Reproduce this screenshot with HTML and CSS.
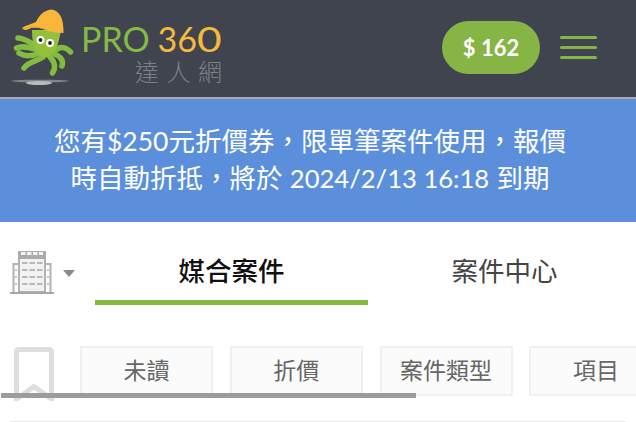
FILE: index.html
```html
<!DOCTYPE html>
<html lang="zh-Hant">
<head>
<meta charset="utf-8">
<title>PRO360</title>
<link rel="stylesheet" href="styles.css">
</head>
<body>
<header class="topbar">
  <div class="logo">
    <svg class="logo-mark" width="77" height="90" viewBox="0 0 77 90">
      <ellipse cx="40" cy="81" rx="29" ry="1.300" fill="#83858a"/>
      <ellipse cx="39" cy="83" rx="13" ry="2" fill="#b9babc"/>
      <g fill="none" stroke="#84bc41" stroke-linecap="round" stroke-width="5.500">
        <path d="M38 47C31 43 25 38 18 38"/>
        <path d="M38 50C31 48 23 45 16.500 48"/>
        <path d="M39 53C33 56 25 57 19 53"/>
        <path d="M43 57C36 62 29 61 24 68"/>
        <path d="M50 57C55 62 56 68 52.500 73"/>
        <path d="M54 54C60 56 64 60 62 66"/>
        <path d="M56 50C60 46 66 47 70.500 52"/>
      </g>
      <path d="M32 30C32 38 33 44 35 49 38 57 46 60 51 55 57 50 59 42 61 30Z" fill="#93c13e"/>
      <path d="M22 28C26 25 32 24 36 22 39 15 45 10 51 9.500 59 10 64 18 63.500 33 58 33 53 32 48 31 42 28 37 27 31 28 28 30 24 31 22 28Z" fill="#f8b63a"/>
      <path d="M24 29C29 26 36 26 48 30" fill="none" stroke="#e0a02e" stroke-width="0.800"/>
      <circle cx="40.500" cy="40" r="4" fill="#fff"/><circle cx="40.500" cy="40" r="1.900" fill="#222"/>
      <circle cx="50" cy="43" r="4" fill="#fff"/><circle cx="50" cy="43" r="1.900" fill="#222"/>
    </svg>
    <div class="logo-text">
      <div class="logo-name"><span class="logo-pro">PRO</span> <span class="logo-num">36<span class="logo-zero">0</span></span></div>
      <div class="logo-sub">達人網</div>
    </div>
  </div>
  <div class="top-actions">
    <div class="balance">$ 162</div>
    <div class="burger"><span></span><span></span><span></span></div>
  </div>
</header>
<section class="notice">您有$250元折價券，限單筆案件使用，報價時自動折抵，將於 <span class="notice-date">2024/2/13 16:18</span> 到期</section>
<nav class="tabs">
  <div class="building">
    <svg width="44" height="44" viewBox="0 0 44 44">
      <rect x="9" y="8" width="26" height="34" fill="#f2f2f2" stroke="#b2b2b2" stroke-width="2"/>
      <rect x="8" y="1" width="28" height="8" fill="#ababab"/>
      <path d="M11 3.500H33" stroke="#f4f4f4" stroke-width="3" stroke-dasharray="4.500 1.500"/>
      <path d="M3.500 43V14H8M40.500 43V14H36" fill="none" stroke="#b2b2b2" stroke-width="2"/>
      <path d="M0 42H44V44H0Z" fill="#a8a8a8"/>
      <path d="M12 13H33M12 20H33M12 27H33M12 34H33" stroke="#b8b8b8" stroke-width="2" stroke-dasharray="5.500 2"/>
      <path d="M5 20H7M5 27H7M5 34H7M37 20H39M37 27H39M37 34H39" stroke="#c4c4c4" stroke-width="2"/>
    </svg>
    <span class="caret"></span>
  </div>
  <div class="tab tab-active">媒合案件</div>
  <div class="tab">案件中心</div>
</nav>
<section class="filters">
  <svg class="bookmark" width="40" height="54" viewBox="0 0 40 54">
    <path d="M2.500 52V5Q2.500 2.500 5 2.500H35Q37.500 2.500 37.500 5V52L20 39.500Z" fill="none" stroke="#dedede" stroke-width="5"/>
  </svg>
  <div class="chip-row">
    <div class="chip">未讀</div>
    <div class="chip">折價</div>
    <div class="chip">案件類型</div>
    <div class="chip">項目</div>
  </div>
  <div class="scrollbar"></div>
</section>
<div class="rule"></div>
</body>
</html>
```
FILE: styles.css
```css
* { box-sizing: border-box; }
html, body { margin: 0; padding: 0; }
body {
  position: relative;
  width: 636px;
  height: 422px;
  overflow: hidden;
  background: #fff;
  font-family: Lato, "Noto Sans CJK TC", sans-serif;
}
.topbar {
  height: 99px;
  background: #3f444e;
  border-bottom: 2px solid #a9abb0;
  display: flex;
  align-items: flex-start;
  justify-content: space-between;
}
.logo { display: flex; }
.logo-mark { flex: none; }
.logo-text { margin: 21px 0 0 4px; }
.logo-name {
  font-family: Lato, sans-serif;
  font-weight: 400;
  font-size: 34px;
  line-height: 36px;
  word-spacing: -1px;
  white-space: nowrap;
}
.logo-pro { color: #84bb45; }
.logo-num { color: #f6b93b; }
.logo-zero { display: inline-block; transform: scaleX(1.25); transform-origin: left center; }
.logo-sub {
  font-family: "Noto Sans CJK TC", sans-serif;
  font-weight: 300;
  font-size: 24px;
  line-height: 28px;
  letter-spacing: 7.5px;
  color: #7e8085;
  margin-left: 54px;
  white-space: nowrap;
}
.top-actions { display: flex; align-items: center; margin: 21px 39px 0 0; gap: 20px; }
.balance {
  width: 98px;
  height: 53px;
  border-radius: 27px;
  background: #86b545;
  color: #fff;
  font-family: Lato, sans-serif;
  font-weight: 700;
  font-size: 22px;
  line-height: 53px;
  text-align: center;
}
.burger { width: 37px; display: flex; flex-direction: column; gap: 6.5px; }
.burger span { height: 3.5px; border-radius: 2px; background: #86b545; }
.notice {
  height: 123px;
  background: #5b8fdc;
  color: #fff;
  padding: 24px 60px 0 44px;
  font-size: 26.5px;
  line-height: 37px;
  text-align: center;
}
.notice-date { font-size: 25.6px; margin: 0 0.5px; }
.tabs { display: flex; height: 83px; }
.building {
  width: 95px;
  flex: none;
  display: flex;
  align-items: flex-start;
  padding: 28px 0 0 10px;
  gap: 9px;
}
.caret {
  margin-top: 20px;
  flex: none;
  width: 0;
  height: 0;
  border-left: 6.5px solid transparent;
  border-right: 6.5px solid transparent;
  border-top: 7px solid #8a8a8a;
}
.tab {
  flex: none;
  width: 273px;
  height: 83px;
  padding-top: 30px;
  font-size: 26.5px;
  line-height: 38px;
  text-align: center;
  color: #444;
}
.tab-active { color: #111; font-weight: 500; border-bottom: 5px solid #86b93f; }
.filters {
  position: relative;
  height: 116px;
  display: flex;
  padding: 41px 0 0 14px;
  overflow: hidden;
}
.bookmark { flex: none; margin-top: 1px; }
.chip-row { display: flex; gap: 16.8px; margin-left: 26px; flex: none; }
.chip {
  flex: none;
  width: 133px;
  height: 50px;
  border: 2px solid #f0f0f0;
  background: #fbfbfb;
  color: #666;
  font-size: 23px;
  line-height: 44px;
  text-align: center;
}
.scrollbar {
  position: absolute;
  left: 1px;
  top: 88px;
  width: 415px;
  height: 5px;
  background: #9c9c9c;
}
.rule {
  position: absolute;
  left: 10px;
  width: 616px;
  top: 421px;
  height: 1px;
  background: #e6e6e6;
}
```
